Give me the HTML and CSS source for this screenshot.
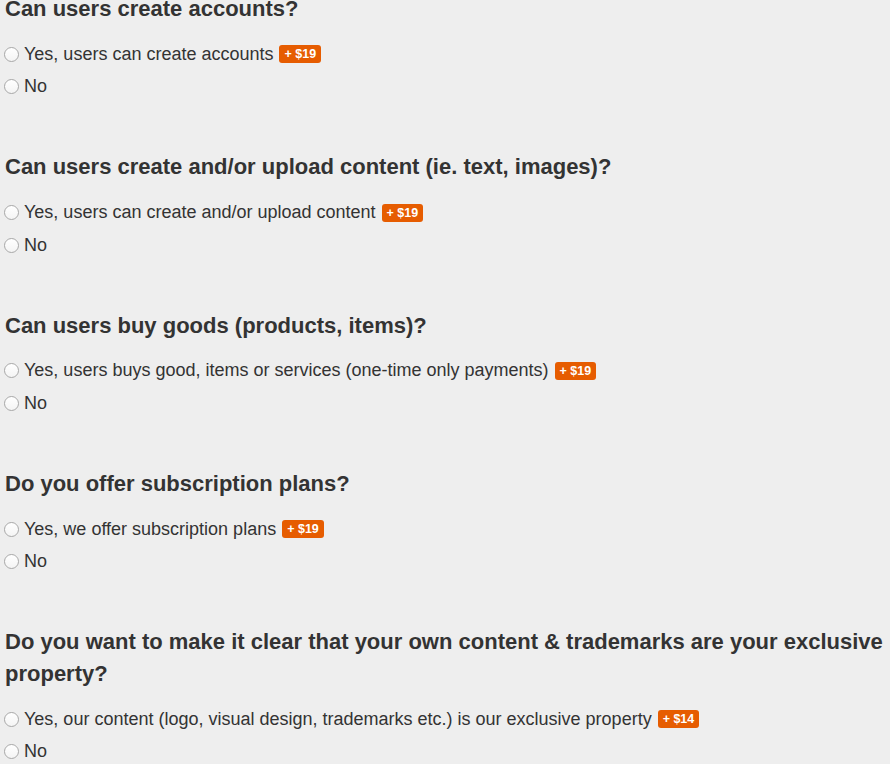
FILE: index.html
```html
<!DOCTYPE html>
<html lang="en">
<head>
    <meta charset="UTF-8">
    <title>Questions</title>
    <link rel="stylesheet" href="styles.css">
</head>
<body>
    <div class="questions">
        <div class="question">
            <h2>Can users create accounts?</h2>
            <label class="option"><span class="radio"></span>Yes, users can create accounts <span class="price">+ $19</span></label>
            <label class="option"><span class="radio"></span>No</label>
        </div>
        <div class="question">
            <h2>Can users create and/or upload content (ie. text, images)?</h2>
            <label class="option"><span class="radio"></span>Yes, users can create and/or upload content <span class="price">+ $19</span></label>
            <label class="option"><span class="radio"></span>No</label>
        </div>
        <div class="question">
            <h2>Can users buy goods (products, items)?</h2>
            <label class="option"><span class="radio"></span>Yes, users buys good, items or services (one-time only payments) <span class="price">+ $19</span></label>
            <label class="option"><span class="radio"></span>No</label>
        </div>
        <div class="question">
            <h2>Do you offer subscription plans?</h2>
            <label class="option"><span class="radio"></span>Yes, we offer subscription plans <span class="price">+ $19</span></label>
            <label class="option"><span class="radio"></span>No</label>
        </div>
        <div class="question">
            <h2>Do you want to make it clear that your own content &amp; trademarks are your exclusive property?</h2>
            <label class="option"><span class="radio"></span>Yes, our content (logo, visual design, trademarks etc.) is our exclusive property <span class="price">+ $14</span></label>
            <label class="option"><span class="radio"></span>No</label>
        </div>
    </div>
</body>
</html>
```

FILE: styles.css
```css
body {
    margin: 0;
    background-color: #eeeeee;
    color: #333;
    font-family: 'Liberation Sans', Arial, sans-serif;
    overflow: hidden;
}
.questions {
    margin-top: -7px;
    padding-left: 5px;
}
.question {
    margin-bottom: 48.3px;
}
h2 {
    font-size: 22px;
    font-weight: bold;
    line-height: 32px;
    margin: 0 0 13px 0;
}
.option {
    display: flex;
    align-items: center;
    height: 32.5px;
    font-size: 18px;
    margin-left: -1px;
}
.radio {
    width: 13px;
    height: 13px;
    border: 1px solid #a8a8a8;
    border-radius: 50%;
    background: linear-gradient(#fff, #f4f4f4);
    margin-right: 5px;
    flex-shrink: 0;
}
.price {
    display: inline-block;
    background-color: #e65c00;
    color: #fff;
    font-size: 12.5px;
    font-weight: bold;
    line-height: 18px;
    padding: 0 5px;
    border-radius: 3px;
    margin-left: 6px;
}
```
